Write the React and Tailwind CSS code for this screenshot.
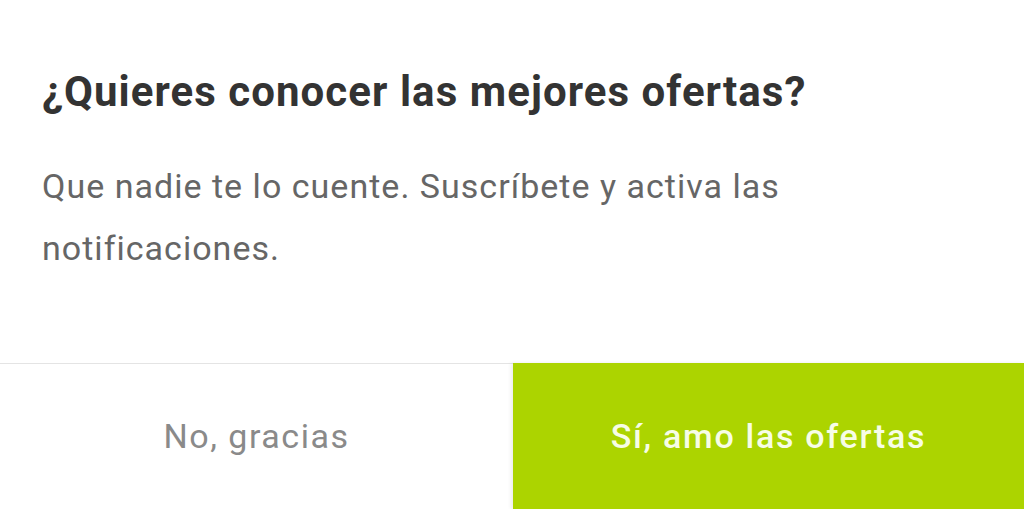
export default function App() {
  return (
    <div
      className="w-[1024px] h-[509px] bg-white flex flex-col overflow-hidden"
      style={{ fontFamily: "Roboto, 'Liberation Sans', sans-serif" }}
    >
      <div className="flex-1 px-[42px] pt-[66px]">
        <h1 className="text-[42px] leading-[52px] font-bold tracking-[0.025em] text-[#333333]">
          ¿Quieres conocer las mejores ofertas?
        </h1>
        <p className="mt-[37px] text-[34px] leading-[62px] tracking-[0.03em] text-[#666666] w-[820px]">
          Que nadie te lo cuente. Suscríbete y activa las notificaciones.
        </p>
      </div>
      <div className="h-[146px] flex border-t border-[#e4e4e4]">
        <button className="w-[513px] flex items-center justify-center text-[34px] tracking-[0.045em] text-[#8a8a8a]">
          No, gracias
        </button>
        <button className="flex-1 -mt-px flex items-center justify-center bg-[#acd400] text-[34px] font-medium tracking-[0.05em] text-[#f7fde6] shadow-[-2px_0_4px_rgba(0,0,0,0.08)]">
          Sí, amo las ofertas
        </button>
      </div>
    </div>
  );
}
